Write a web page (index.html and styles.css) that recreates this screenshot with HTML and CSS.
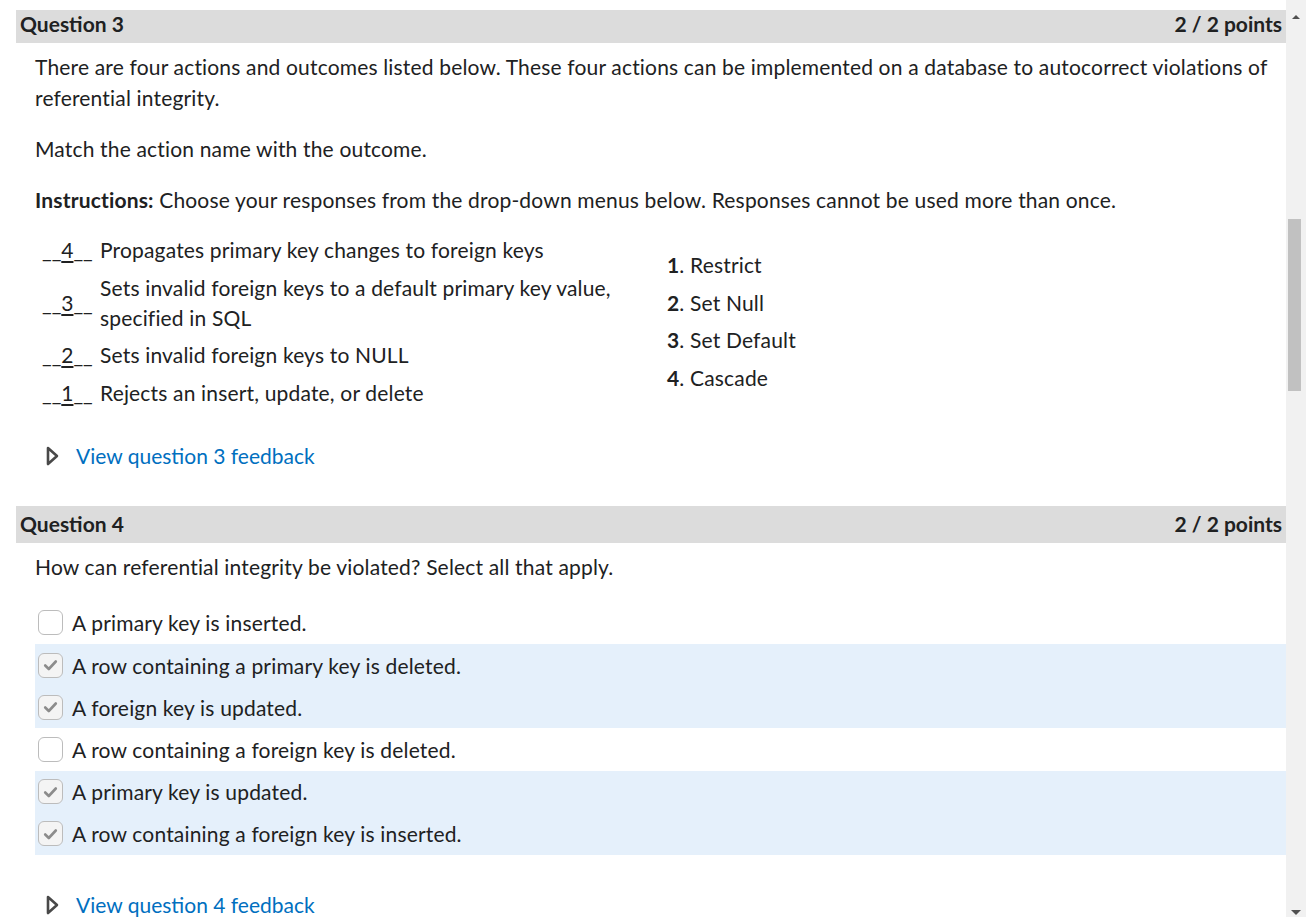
FILE: index.html
```html
<!DOCTYPE html>
<html lang="en">
<head>
<meta charset="utf-8">
<title>Quiz</title>
<link rel="stylesheet" href="styles.css">
</head>
<body>
<div class="frame">
  <main class="content">
    <section class="question">
      <header class="qhead first"><h2>Question 3</h2><span class="pts">2 / 2 points</span></header>
      <div class="qbody">
        <p class="para">There are four actions and outcomes listed below. These four actions can be implemented on a database to autocorrect violations of referential integrity.</p>
        <p class="para">Match the action name with the outcome.</p>
        <p class="para"><strong>Instructions:</strong> Choose your responses from the drop-down menus below. Responses cannot be used more than once.</p>
        <div class="match">
          <div class="match-left">
            <div class="mrow"><span class="blank">__<u>4</u>__</span><span class="mtext">Propagates primary key changes to foreign keys</span></div>
            <div class="mrow"><span class="blank">__<u>3</u>__</span><span class="mtext">Sets invalid foreign keys to a default primary key value, specified in SQL</span></div>
            <div class="mrow"><span class="blank">__<u>2</u>__</span><span class="mtext">Sets invalid foreign keys to NULL</span></div>
            <div class="mrow"><span class="blank">__<u>1</u>__</span><span class="mtext">Rejects an insert, update, or delete</span></div>
          </div>
          <ol class="match-right">
            <li><b>1</b>. Restrict</li>
            <li><b>2</b>. Set Null</li>
            <li><b>3</b>. Set Default</li>
            <li><b>4</b>. Cascade</li>
          </ol>
        </div>
        <div class="feedback">
          <svg class="tri" width="13" height="20" viewBox="0 0 13 20"><path d="M2 2 L11 10 L2 18 Z" fill="none" stroke="#494949" stroke-width="2.6" stroke-linejoin="round"/></svg>
          <a href="#">View question 3 feedback</a>
        </div>
      </div>
    </section>

    <section class="question q4">
      <header class="qhead"><h2>Question 4</h2><span class="pts">2 / 2 points</span></header>
      <div class="qbody">
        <p class="para">How can referential integrity be violated? Select all that apply.</p>
        <ul class="choices">
          <li class="choice"><span class="box"></span>A primary key is inserted.</li>
          <li class="choice sel"><span class="box on"><svg width="15" height="12" viewBox="0 0 15 12"><path d="M2.2 6.5 L5.8 10 L12.8 2.5" fill="none" stroke="#8c8c8c" stroke-width="2.6" stroke-linecap="round" stroke-linejoin="round"/></svg></span>A row containing a primary key is deleted.</li>
          <li class="choice sel"><span class="box on"><svg width="15" height="12" viewBox="0 0 15 12"><path d="M2.2 6.5 L5.8 10 L12.8 2.5" fill="none" stroke="#8c8c8c" stroke-width="2.6" stroke-linecap="round" stroke-linejoin="round"/></svg></span>A foreign key is updated.</li>
          <li class="choice"><span class="box"></span>A row containing a foreign key is deleted.</li>
          <li class="choice sel"><span class="box on"><svg width="15" height="12" viewBox="0 0 15 12"><path d="M2.2 6.5 L5.8 10 L12.8 2.5" fill="none" stroke="#8c8c8c" stroke-width="2.6" stroke-linecap="round" stroke-linejoin="round"/></svg></span>A primary key is updated.</li>
          <li class="choice sel"><span class="box on"><svg width="15" height="12" viewBox="0 0 15 12"><path d="M2.2 6.5 L5.8 10 L12.8 2.5" fill="none" stroke="#8c8c8c" stroke-width="2.6" stroke-linecap="round" stroke-linejoin="round"/></svg></span>A row containing a foreign key is inserted.</li>
        </ul>
        <div class="feedback fb4">
          <svg class="tri" width="13" height="20" viewBox="0 0 13 20"><path d="M2 2 L11 10 L2 18 Z" fill="none" stroke="#494949" stroke-width="2.6" stroke-linejoin="round"/></svg>
          <a href="#">View question 4 feedback</a>
        </div>
      </div>
    </section>
  </main>
  <div class="scrollbar">
    <div class="arrow up"></div>
    <div class="track"><div class="thumb"></div></div>
    <div class="arrow down"></div>
  </div>
</div>
</body>
</html>
```

FILE: styles.css
```css
html, body {
  margin: 0;
  padding: 0;
  height: 100%;
  overflow: hidden;
  background: #fff;
}
body {
  font-family: Lato, "Open Sans", sans-serif;
  color: #202122;
  font-size: 21px;
  letter-spacing: 0.17px;
}
.frame {
  display: flex;
  height: 917px;
}
.content {
  flex: 1;
  padding: 10px 0 0 16px;
  overflow: hidden;
}
.qhead {
  display: flex;
  justify-content: space-between;
  align-items: flex-end;
  background: #dcdcdc;
  height: 37px;
  box-sizing: border-box;
  padding: 0 4px 7px;
  line-height: 25px;
  letter-spacing: 0;
}
.qhead.first { height: 33px; }
.qhead h2 {
  margin: 0;
  font-size: 21px;
  font-weight: 700;
}
.pts {
  font-size: 21px;
  font-weight: 700;
}
.qbody {
  padding-left: 19px;
}
.para {
  margin: 0;
  line-height: 31px;
  padding-right: 8px;
}
.qbody > .para:first-child { margin-top: 8px; }
.para + .para { margin-top: 20px; }

.match {
  display: flex;
  align-items: center;
  margin-top: 20px;
}
.match-left {
  width: 632px;
  display: flex;
  flex-direction: column;
  gap: 7.6px;
  flex: none;
}
.mrow {
  display: flex;
  align-items: center;
  line-height: 30px;
}
.blank {
  width: 65px;
  flex: none;
  padding-left: 7px;
  box-sizing: border-box;
  letter-spacing: 0;
}
.blank u { text-underline-offset: 3px; }
.mtext {
  width: 540px;
}
.match-right {
  list-style: none;
  margin: 0;
  padding: 0;
  display: flex;
  flex-direction: column;
  gap: 7.7px;
  line-height: 30px;
}
.feedback {
  display: flex;
  align-items: center;
  gap: 17px;
  margin-top: 33px;
  padding-left: 11px;
  height: 30px;
}
.feedback a {
  color: #006fbf;
  text-decoration: none;
  letter-spacing: 0;
}
.q4 { margin-top: 35px; }

.choices {
  list-style: none;
  margin: 20px 0 0;
  padding: 0;
}
.choice {
  display: flex;
  align-items: center;
  height: 42.2px;
  gap: 9px;
  padding-left: 3px;
}
.choice.sel { background: #e5f0fb; }
.box {
  width: 23px;
  height: 23px;
  border: 1px solid #bcbcbc;
  border-radius: 6px;
  background: #fff;
  display: flex;
  align-items: center;
  justify-content: center;
  flex: none;
}
.box.on { background: #f4f4f4; }
.fb4 { margin-top: 35px; }

.scrollbar {
  width: 20px;
  flex: none;
  background: #f1f1f1;
  display: flex;
  flex-direction: column;
  align-items: center;
}
.arrow {
  height: 17px;
  width: 20px;
  position: relative;
}
.arrow::after {
  content: "";
  position: absolute;
  left: 5px;
  border-left: 4px solid transparent;
  border-right: 4px solid transparent;
}
.arrow.up::after { top: 15px; border-bottom: 4px solid #505050; left: 6px; }
.arrow.down::after { bottom: 2px; border-top: 5px solid #505050; border-left-width: 5px; border-right-width: 5px; }
.track {
  flex: 1;
  width: 100%;
  padding-top: 202px;
}
.thumb {
  width: 13px;
  margin-left: 2px;
  height: 172px;
  background: #c1c1c1;
}
```
